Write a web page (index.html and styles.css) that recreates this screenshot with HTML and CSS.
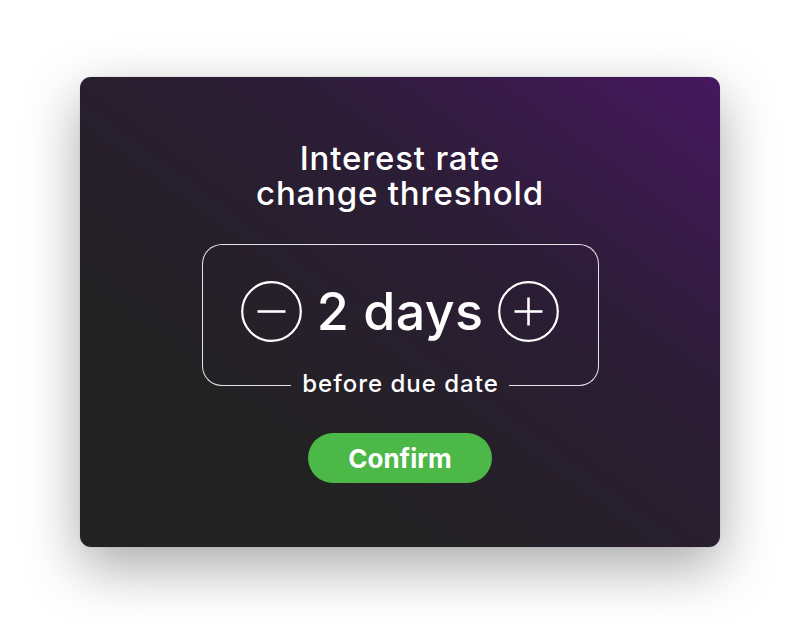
FILE: index.html
```html
<!DOCTYPE html>
<html lang="en">
<head>
<meta charset="utf-8">
<title>Interest rate change threshold</title>
<link rel="stylesheet" href="styles.css">
</head>
<body>
<div class="page">
  <section class="card">
    <h1 class="title"><span class="line">Interest rate</span><span class="line">change threshold</span></h1>
    <div class="stepper">
      <div class="stepper-top">
        <button class="round-btn" aria-label="Decrease">
          <svg viewBox="0 0 61 61" width="61" height="61"><circle cx="30.5" cy="30.5" r="29.3" fill="none" stroke="#fff" stroke-width="2.2"/><line x1="16.5" y1="30.5" x2="44.5" y2="30.5" stroke="#fff" stroke-width="2.6"/></svg>
        </button>
        <span class="value">2 days</span>
        <button class="round-btn" aria-label="Increase">
          <svg viewBox="0 0 61 61" width="61" height="61"><circle cx="30.5" cy="30.5" r="29.3" fill="none" stroke="#fff" stroke-width="2.2"/><line x1="16.5" y1="30.5" x2="44.5" y2="30.5" stroke="#fff" stroke-width="2.6"/><line x1="30.5" y1="16.5" x2="30.5" y2="44.5" stroke="#fff" stroke-width="2.6"/></svg>
        </button>
      </div>
      <div class="stepper-bottom">
        <span class="seg seg-left"></span>
        <span class="label">before due date</span>
        <span class="seg seg-right"></span>
      </div>
    </div>
    <button class="confirm">Confirm</button>
  </section>
</div>
</body>
</html>
```
FILE: styles.css
```css
html, body {
  margin: 0;
  padding: 0;
  background: #ffffff;
}
.page {
  width: 800px;
  height: 624px;
  padding-top: 77px;
  box-sizing: border-box;
  display: flex;
  justify-content: center;
  align-items: flex-start;
  font-family: Inter, "Noto Sans", sans-serif;
  color: #fff;
}
.card {
  width: 640px;
  height: 470px;
  box-sizing: border-box;
  border-radius: 11px;
  background: linear-gradient(to bottom left, #46175f 0%, #2c1d36 35%, #222222 75%);
  box-shadow: 0 20px 55px rgba(0, 0, 0, 0.34), 0 0 1px rgba(0, 0, 0, 0.4);
  display: flex;
  flex-direction: column;
  align-items: center;
  padding-top: 64px;
}
.title {
  margin: 0;
  font-size: 33px;
  font-weight: 500;
  text-align: center;
  letter-spacing: 0.8px;
  display: flex;
  flex-direction: column;
  align-items: center;
}
.title .line {
  display: block;
  line-height: 35px;
  height: 35px;
}
.stepper {
  margin-top: 33px;
  width: 397px;
}
.stepper-top {
  border: 1.5px solid #e6e3ea;
  border-bottom: none;
  border-radius: 20px 20px 0 0;
  padding: 36px 0 22px;
  display: flex;
  justify-content: center;
  align-items: center;
  gap: 15px;
}
.round-btn {
  width: 61px;
  height: 61px;
  padding: 0;
  margin: 0;
  border: none;
  background: none;
  display: block;
}
.round-btn svg {
  display: block;
}
.value {
  font-size: 52px;
  line-height: 61px;
  font-weight: 500;
  letter-spacing: 0.3px;
}
.stepper-bottom {
  display: flex;
  align-items: flex-end;
}
.seg {
  flex: 1;
  height: 21px;
  border-bottom: 1.5px solid #e6e3ea;
}
.seg-left {
  border-left: 1.5px solid #e6e3ea;
  border-bottom-left-radius: 20px;
}
.seg-right {
  border-right: 1.5px solid #e6e3ea;
  border-bottom-right-radius: 20px;
}
.label {
  padding: 0 10px 0 11px;
  font-size: 24px;
  line-height: 26px;
  margin-bottom: -11px;
  font-weight: 500;
  letter-spacing: 1px;
}
.confirm {
  margin-top: 47px;
  width: 184px;
  height: 50px;
  border: none;
  border-radius: 25px;
  background: #4cb848;
  color: #fff;
  font-family: Inter, "Noto Sans", sans-serif;
  font-size: 26px;
  font-weight: 700;
  padding: 0;
}
```
